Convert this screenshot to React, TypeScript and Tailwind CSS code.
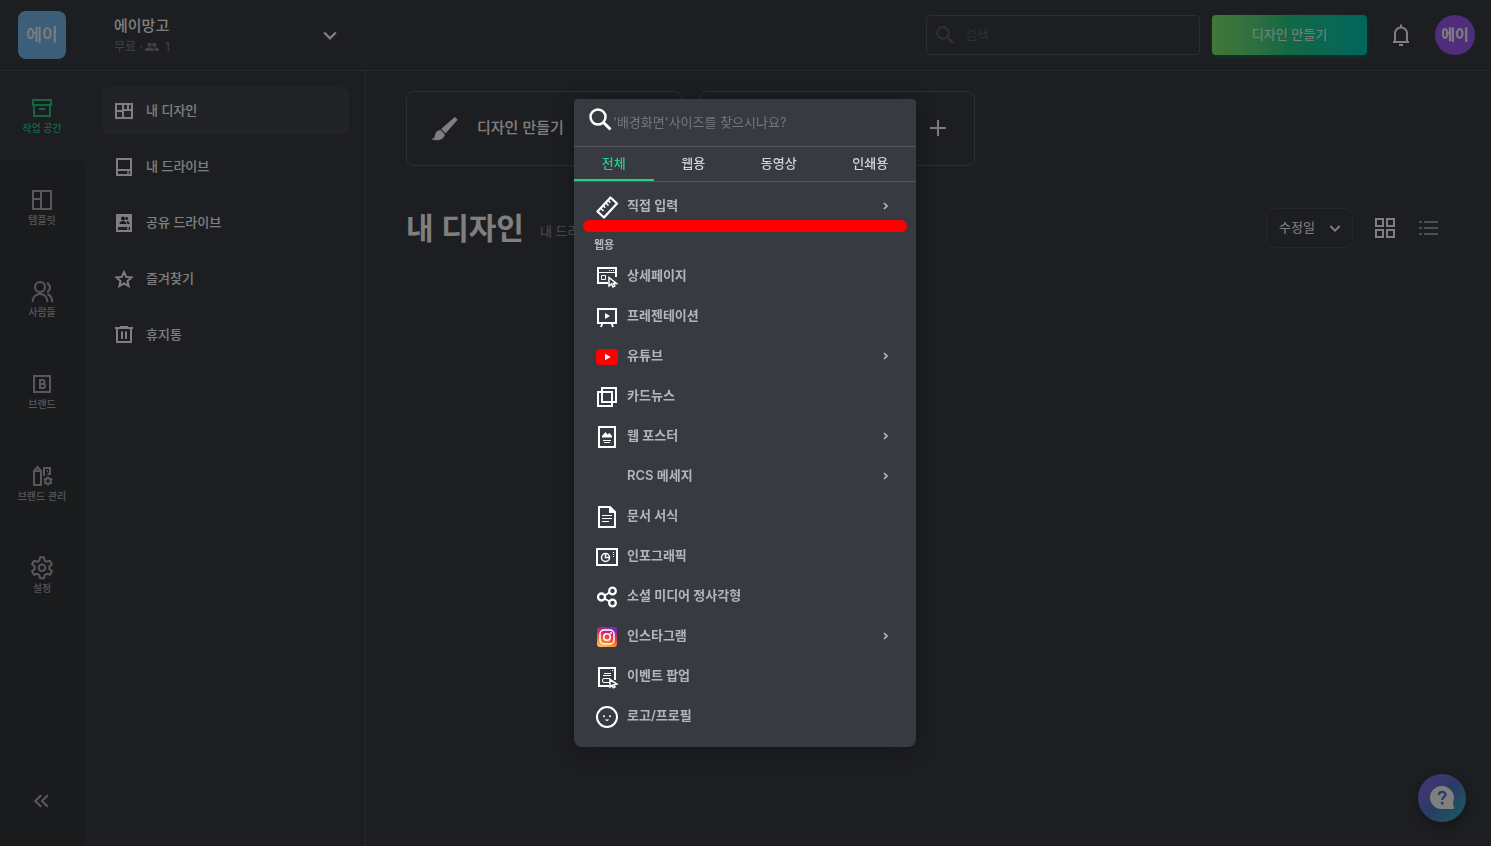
import type { ReactNode } from "react";

function Icon({ children, className = "size-6" }: { children: ReactNode; className?: string }) {
  return (
    <svg viewBox="0 0 24 24" aria-hidden="true" className={`shrink-0 ${className}`} fill="none" stroke="currentColor" strokeWidth="2">
      {children}
    </svg>
  );
}

function Chevron({ className }: { className?: string }) {
  return (
    <Icon className={className}>
      <path d="m5 9 7 7 7-7" strokeWidth="2.800" />
    </Icon>
  );
}

const railItems: { label: string; icon: ReactNode }[] = [
  {
    label: "작업 공간",
    icon: <Icon><path d="M3 4h18v5H3zM4 9v11h16V9M9 13h6" /></Icon>,
  },
  {
    label: "템플릿",
    icon: <Icon><path d="M3 3h18v18H3zM11 3v18M3 11h8" /></Icon>,
  },
  {
    label: "사람들",
    icon: (
      <Icon>
        <circle cx="10" cy="7" r="5" />
        <path d="M2.500 22c.3-5 3.300-8 7.500-8s7.200 3 7.500 8M17 3c4 2 4 7 0 9M17.500 14c3.500 1.500 4.500 4.500 4.700 8" />
      </Icon>
    ),
  },
  {
    label: "브랜드",
    icon: (
      <Icon>
        <path d="M4 4h16v16H4z" />
        <path d="M10 8h2.500a2 2 0 0 1 0 4H10zM10 12h3a2 2 0 0 1 0 4h-3z" />
      </Icon>
    ),
  },
  {
    label: "브랜드 관리",
    icon: (
      <Icon>
        <path d="M4 21V7l3.500-4L11 7v14zM4 7h7M14 12V4h6v6h-2.500M17 7h1" />
        <circle cx="18" cy="17" r="2.800" />
        <path d="M18 12.500v2M18 19.500v2M14 14.700l1.800 1M20.200 18.300l1.800 1M14 19.300l1.800-1M20.200 15.700l1.800-1" />
      </Icon>
    ),
  },
  {
    label: "설정",
    icon: (
      <Icon>
        <g transform="translate(0 -0.700)">
          <path d="M10 2h4l.7 3.300 2 1.200 3.200-1 2 3.500-2.500 2.300v2.400l2.500 2.300-2 3.500-3.200-1-2 1.200L14 23h-4l-.7-3.300-2-1.200-3.200 1-2-3.500 2.500-2.300v-2.400L2.100 9l2-3.500 3.200 1 2-1.200z" strokeLinejoin="round" />
          <circle cx="12" cy="12.500" r="3.300" />
        </g>
      </Icon>
    ),
  },
];

const folders: { label: string; icon: ReactNode }[] = [
  {
    label: "내 디자인",
    icon: <Icon><path d="M4 5h16v14H4zM11 5v14M4 12h7M11 11h9M16 5v6" /></Icon>,
  },
  {
    label: "내 드라이브",
    icon: <Icon><path d="M5 4h14v16H5zM5 15h14M15 17.500h2" /></Icon>,
  },
  {
    label: "공유 드라이브",
    icon: (
      <Icon>
        <path d="M5 4h14v16H5zM5 15h14M15 17.500h2" />
        <path d="M5 4h14v11H5z" fill="currentColor" />
        <g fill="#303237" stroke="none">
          <circle cx="11" cy="7.500" r="2" />
          <path d="M7.500 13c0-4 7-4 7 0z" />
          <circle cx="14.700" cy="7.500" r="1.400" />
          <path d="M14.500 10c2 0 3 1 3 3h-2z" />
        </g>
      </Icon>
    ),
  },
  {
    label: "즐겨찾기",
    icon: <Icon><path d="m12 5.200 2.200 4.700 5.200.6-3.900 3.500 1.100 5.100-4.600-2.600-4.600 2.600L8.500 14l-3.900-3.500 5.200-.6z" /></Icon>,
  },
  {
    label: "휴지통",
    icon: <Icon><path d="M5 6v13h14V6M3 5h18M8 4h8" /><path d="M10 8.500v7.500M14 8.500v7.500" /></Icon>,
  },
];

const directIcon = (
  <Icon>
    <path d="M2.500 16.500 15.500 2.500l6.500 6L9 22.500z" strokeWidth="2.300" strokeLinejoin="round" />
    <path d="m6 13.500 2.500 2.500M8.500 11l1.800 1.800M11 8l2.500 2.500M13.500 5.800l1.800 1.800" strokeWidth="1.600" />
  </Icon>
);

const webItems: { label: string; icon?: ReactNode; more?: boolean }[] = [
  {
    label: "상세페이지",
    icon: (
      <Icon>
        <path d="M13 18H3V3h18v9" />
        <path d="M3 7.500h18" strokeWidth="1" />
        <path d="M14 5.500h1M16 5.500h1M18 5.500h1" strokeWidth="1" />
        <path d="M6.500 10.500h4v4h-4z" strokeWidth="1" />
        <path d="M14 12.500v8.500l2.500-2 1.500 3 1.800-1-1.400-2.500h3.100z" strokeWidth="1.500" />
      </Icon>
    ),
  },
  {
    label: "프레젠테이션",
    icon: (
      <Icon>
        <path d="M3 4h18v14H3zM7.500 18 6 22M16.500 18l1.500 4" />
        <path d="m10 8 5 3-5 3z" fill="currentColor" stroke="none" />
      </Icon>
    ),
  },
  {
    label: "유튜브",
    more: true,
    icon: (
      <Icon>
        <rect x="1" y="4" width="22" height="16" rx="3.500" fill="#ff0000" stroke="none" />
        <path d="m10 8.800 5.700 3.200-5.700 3.200z" fill="#fff" stroke="none" />
      </Icon>
    ),
  },
  {
    label: "카드뉴스",
    icon: <Icon><path d="M3 7h14v14H3zM7 3h14v14H7z" /></Icon>,
  },
  {
    label: "웹 포스터",
    more: true,
    icon: (
      <Icon>
        <path d="M4 2h16v20H4z" />
        <path d="M7 12.500V11l3.500-4 2 2.500L14.500 8l2.500 3v1.500z" fill="currentColor" stroke="none" />
        <path d="M8 15.500h8M9 17.500h6" strokeWidth="1" />
      </Icon>
    ),
  },
  { label: "RCS 메세지", more: true },
  {
    label: "문서 서식",
    icon: (
      <Icon>
        <path d="M4 2h11l5 5v15H4z" />
        <path d="M14 1v7h7z" fill="currentColor" stroke="none" />
        <path d="M7 10.500h10M7 13.500h10M7 16.500h7" strokeWidth="1" />
      </Icon>
    ),
  },
  {
    label: "인포그래픽",
    icon: (
      <Icon>
        <path d="M2 4h20v16H2z" />
        <circle cx="10.500" cy="12.500" r="4" strokeWidth="1.500" />
        <path d="M10.500 8.500v4h4" strokeWidth="1.500" />
        <path d="M18.500 7v1M18.500 9v1M18.500 11v1" strokeWidth="1" />
      </Icon>
    ),
  },
  {
    label: "소셜 미디어 정사각형",
    icon: (
      <Icon>
        <circle cx="6.500" cy="12" r="3.500" strokeWidth="2.300" />
        <circle cx="17.500" cy="6" r="3.300" strokeWidth="2.300" />
        <circle cx="17.500" cy="18" r="3.300" strokeWidth="2.300" />
        <path d="m9.500 10.500 5-3M9.500 13.500l5 3" />
      </Icon>
    ),
  },
  {
    label: "인스타그램",
    more: true,
    icon: (
      <Icon>
        <defs>
          <linearGradient id="insta" x1="0.200" y1="1" x2="0.500" y2="0">
            <stop offset="0" stopColor="#fdc468" />
            <stop offset="0.300" stopColor="#fa7e1e" />
            <stop offset="0.650" stopColor="#df2a5c" />
            <stop offset="1" stopColor="#7a2bbd" />
          </linearGradient>
        </defs>
        <rect x="2" y="2" width="20" height="20" rx="3" fill="url(#insta)" stroke="none" />
        <rect x="5" y="5" width="14" height="14" rx="4" stroke="#fff" strokeWidth="1.500" />
        <circle cx="12" cy="12" r="3.300" stroke="#fff" strokeWidth="1.600" />
        <circle cx="16" cy="8" r="1" fill="#fff" stroke="none" />
      </Icon>
    ),
  },
  {
    label: "이벤트 팝업",
    icon: (
      <Icon>
        <path d="M14 21H4V3h16v12" />
        <path d="M17 5.500h1M9 8.500h7M8 10.500h8" strokeWidth="1" />
        <rect x="7.500" y="13.500" width="8" height="4" rx="1.500" strokeWidth="1" />
        <path d="M15 14.500v7.500l2.300-1.700 1 2.500 1.700-.8-1.100-2.400 3-.6z" strokeWidth="1.500" />
      </Icon>
    ),
  },
  {
    label: "로고/프로필",
    icon: (
      <Icon>
        <circle cx="12" cy="12" r="10" />
        <circle cx="9" cy="11.300" r="1" fill="currentColor" stroke="none" />
        <circle cx="15" cy="11.300" r="1" fill="currentColor" stroke="none" />
        <path d="M10.500 14.500c.7 1 2.300 1 3 0" strokeWidth="1.300" />
      </Icon>
    ),
  },
];

const tabs = ["전체", "웹용", "동영상", "인쇄용"];

function SizeRow({ label, icon, more }: { label: string; icon?: ReactNode; more?: boolean }) {
  return (
    <button type="button" className="flex h-10 w-full items-center pt-0.5 pr-6 pl-[21px] text-left text-[13px] font-semibold text-[#b4b5b8]">
      <span className="mt-0.5 size-6 text-white">{icon}</span>
      <span className="ml-2 grow">{label}</span>
      {more && (
        <Icon className="size-3">
          <path d="m8 6 6 6-6 6" strokeWidth="3.500" />
        </Icon>
      )}
    </button>
  );
}

function Header() {
  return (
    <header className="flex h-[71px] shrink-0 items-center border-b border-[#505257] pr-4 pl-[18px]">
      <div className="flex size-12 items-center justify-center rounded-lg bg-[#7bbcf2] pt-0.5 text-[17px] font-medium text-white">에이</div>
      <button type="button" className="ml-12 flex w-[226px] items-center justify-between text-left">
        <span>
          <span className="block text-[15px] leading-6 font-medium">에이망고</span>
          <span className="flex items-center text-xs leading-[18px] text-[#85868a]">
            무료 ·
            <svg viewBox="0 0 24 24" aria-hidden="true" className="mr-[6px] ml-0.5 size-[14px]" fill="currentColor">
              <circle cx="8" cy="8" r="3.500" />
              <circle cx="16" cy="8" r="3.500" />
              <path d="M0 19v-2.500C0 14 5 13 8 13s7 1 7 3.500V19zM17 19v-3c0-1-.5-2-1.500-3 3.500 0 8.500 1 8.500 3.500V19z" />
            </svg>
            1
          </span>
        </span>
        <Chevron className="size-5" />
      </button>
      <label className="ml-auto flex h-10 w-[274px] items-center rounded border border-[#5a5c61] px-2">
        <Icon className="size-5 text-[#5c5e64]">
          <circle cx="9.500" cy="9.500" r="7" strokeWidth="2.500" />
          <path d="m14.500 14.500 7.500 7.500" strokeWidth="3" />
        </Icon>
        <input aria-label="검색" placeholder="검색" className="ml-[10px] min-w-0 grow bg-transparent text-[13px] outline-none placeholder:text-[#5c5e64]" />
      </label>
      <button type="button" className="ml-3 h-10 w-[155px] rounded bg-linear-to-r from-[#86f070] from-0% via-[#24d08a] via-50% to-[#00ccb8] text-[13px] shadow-[0_2px_4px_rgba(0,200,130,0.3)]">
        디자인 만들기
      </button>
      <button type="button" aria-label="알림" className="ml-[22px]">
        <Icon>
          <path d="M6 19v-8.500a6 6 0 0 1 12 0V19M4 19h16M10 22h4M12 1.500v3" />
        </Icon>
      </button>
      <button type="button" className="ml-[22px] size-10 rounded-full bg-[#a05bf5] text-[15px] font-bold">에이</button>
    </header>
  );
}

function Rail() {
  return (
    <nav className="flex w-[86px] shrink-0 flex-col">
      {railItems.map((item, i) => (
        <a
          key={item.label}
          href="#"
          className={
            i === 0
              ? "flex h-[88px] flex-col items-center pt-[25px] pr-0.5 text-[10px] leading-4 font-medium text-[#25cf83]"
              : i === 1
                ? "flex h-[96px] flex-col items-center rounded-tr-lg bg-[#34363b] pt-[29px] pr-0.5 text-[10px] leading-4 font-medium text-[#b0b1b4]"
                : "flex h-[92px] flex-col items-center bg-[#34363b] pt-[25px] pr-0.5 text-[10px] leading-4 font-medium text-[#b0b1b4]"
          }
        >
          {item.icon}
          {item.label}
        </a>
      ))}
      <div className="flex grow items-end justify-center bg-[#34363b] pr-0.5 pb-[35px] text-[#b0b1b4]">
        <button type="button" aria-label="접기" className="block">
          <Icon className="size-5">
            <path d="m11 5-7 7 7 7M19 5l-7 7 7 7" strokeWidth="2.500" />
          </Icon>
        </button>
      </div>
    </nav>
  );
}

function FolderNav() {
  return (
    <nav className="flex w-[280px] shrink-0 flex-col gap-2 border-r border-[#505257] px-4 py-4">
      {folders.map((folder, i) => (
        <a
          key={folder.label}
          href="#"
          className={
            i === 0
              ? "flex h-12 items-center gap-[10px] rounded-lg bg-[#44464c] px-[10px] text-[13px] font-medium"
              : "flex h-12 items-center gap-[10px] rounded-lg px-[10px] text-[13px] font-medium"
          }
        >
          {folder.icon}
          {folder.label}
        </a>
      ))}
    </nav>
  );
}

function Workspace() {
  return (
    <main className="grow px-10 pt-5 pr-[50px]">
      <div className="flex gap-[17px]">
        <button type="button" className="flex h-[75px] w-[276px] items-center rounded-lg border border-[#5a5c61] pl-6 text-[15px] font-medium">
          <svg viewBox="0 0 24 24" aria-hidden="true" className="size-7" fill="currentColor">
            <path d="M20.500 2 22.500 4 12.500 15.500 9 12zM8 13l3.500 3.500C11 21 6 22.500 1 20.500c3-.5 2-2 3-4.500.7-1.800 2.300-2.700 4-3z" stroke="currentColor" strokeWidth="0.600" />
          </svg>
          <span className="ml-[18px]">디자인 만들기</span>
        </button>
        <button type="button" aria-label="추가" className="flex h-[75px] w-[276px] items-center justify-end rounded-lg border border-[#5a5c61] pr-6 pb-0.5">
          <Icon><path d="M12 4v16M4 12h16" /></Icon>
        </button>
      </div>
      <div className="mt-[42px] flex h-10 items-center">
        <h1 className="text-[30px] leading-10 font-semibold">내 디자인</h1>
        <span className="mt-2 ml-4 text-[13px] text-[#9b9ca0]">내 드라이브</span>
        <div className="relative ml-auto">
          <select aria-label="정렬" className="h-10 w-[87px] appearance-none rounded-lg border border-[#4c4e54] bg-transparent pl-3 text-[13px] text-white">
            <option>수정일</option>
          </select>
          <Chevron className="pointer-events-none absolute top-3 right-[10px] size-4" />
        </div>
        <button type="button" aria-label="격자로 보기" className="ml-5">
          <Icon><path d="M3 3h7v7H3zM14 3h7v7h-7zM3 14h7v7H3zM14 14h7v7h-7z" /></Icon>
        </button>
        <button type="button" aria-label="목록으로 보기" className="ml-5 text-[#9b9ca0]">
          <Icon><path d="M7 6h14M7 12h14M7 18h14M2 6h3M2 12h3M2 18h3" /></Icon>
        </button>
      </div>
    </main>
  );
}

function SizeDialog() {
  return (
    <div role="dialog" aria-modal="true" aria-label="디자인 만들기" className="relative w-[342px] overflow-hidden rounded-t rounded-b-lg bg-[#383a42] pb-3 shadow-[0_4px_24px_rgba(0,0,0,0.3)]">
      <label className="flex h-12 items-center border-b border-[#54565d] pl-[14px]">
        <Icon className="mb-2 size-6 text-white">
          <circle cx="10" cy="10" r="7.500" strokeWidth="2.500" />
          <path d="m15.500 15.500 7 7" strokeWidth="3" />
        </Icon>
        <input
          aria-label="사이즈 검색"
          placeholder="'배경화면'사이즈를 찾으시나요?"
          className="ml-px min-w-0 grow bg-transparent text-[13px] text-white outline-none placeholder:text-[#76777b]"
        />
      </label>
      <div role="tablist" className="flex h-[35px] border-b border-[#54565d] text-[13px] font-medium text-[#d4d4d6]">
        {tabs.map((tab, i) => (
          <button
            key={tab}
            type="button"
            role="tab"
            aria-selected={i === 0}
            className={
              i === 0
                ? "flex-auto border-b-2 border-[#25cf83] px-[27px] pt-0.5 text-[#25cf83]"
                : "flex-auto border-b-2 border-transparent px-[27px] pt-0.5"
            }
          >
            {tab}
          </button>
        ))}
      </div>
      <div className="pt-[3px]">
        <SizeRow label="직접 입력" icon={directIcon} more />
        <h2 className="flex h-[30px] items-center pt-[10px] pl-5 text-[11px] font-semibold text-[#b4b5b8]">웹용</h2>
        {webItems.map((item) => (
          <SizeRow key={item.label} {...item} />
        ))}
      </div>
      <div className="absolute inset-x-[9px] top-[121px] h-3 rounded-full bg-[#ff0000]" />
    </div>
  );
}

export default function App() {
  return (
    <div className="relative flex min-h-screen flex-col bg-[#3a3c42] font-['Inter','Noto_Sans_CJK_KR',sans-serif] text-white">
      <Header />
      <div className="flex grow">
        <Rail />
        <FolderNav />
        <Workspace />
      </div>
      <button
        type="button"
        aria-label="도움말"
        className="fixed right-[25px] bottom-6 flex size-12 items-center justify-center rounded-full bg-linear-to-br from-[#9468f2] via-[#5276cc] to-[#15c0b5] shadow-[0_4px_12px_rgba(0,0,0,0.3)]"
      >
        <svg viewBox="0 0 24 24" aria-hidden="true" className="size-6">
          <path d="M12 0a12 11.500 0 0 1 11 16l1 7h-12a12 11.500 0 0 1 0-23z" fill="#fff" />
          <path d="M9 9c0-4 6.500-4 6.500-.3C15.500 11 12.200 11 12.200 14" fill="none" stroke="#4f79cf" strokeWidth="2.300" />
          <circle cx="12.200" cy="17" r="1.500" fill="#4f79cf" />
        </svg>
      </button>
      <div className="fixed inset-0 flex items-center justify-center bg-black/50 pr-px">
        <SizeDialog />
      </div>
    </div>
  );
}
